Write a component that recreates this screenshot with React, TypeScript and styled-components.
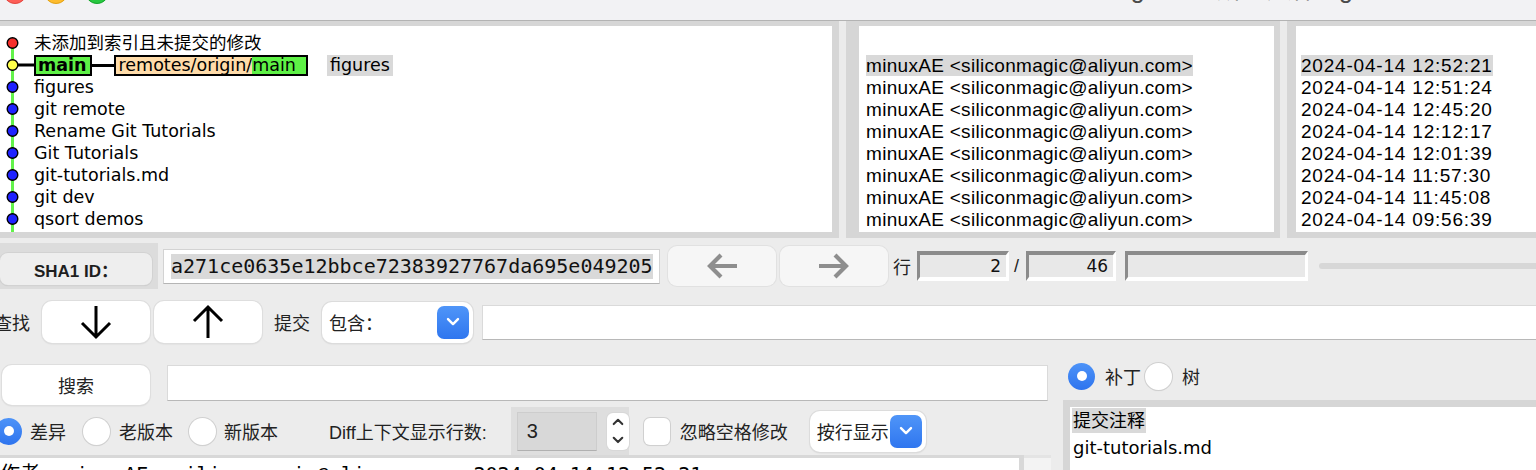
import styled, { createGlobalStyle } from "styled-components";

const GlobalStyle = createGlobalStyle`
  html, body { margin: 0; padding: 0; background: #ececec; overflow: hidden; }
  * { box-sizing: border-box; }
`;

const LIST_FONT = `"DejaVu Sans", "Noto Sans CJK SC", sans-serif`;
const UI_FONT = `"Liberation Sans", "Noto Sans CJK SC", sans-serif`;
const MONO_FONT = `"DejaVu Sans Mono", "Noto Sans CJK SC", monospace`;

type Commit = { title: string; author: string; date: string };

const commits: Commit[] = [
  { title: "figures", author: "minuxAE <siliconmagic@aliyun.com>", date: "2024-04-14 12:51:24" },
  { title: "git remote", author: "minuxAE <siliconmagic@aliyun.com>", date: "2024-04-14 12:45:20" },
  { title: "Rename Git Tutorials", author: "minuxAE <siliconmagic@aliyun.com>", date: "2024-04-14 12:12:17" },
  { title: "Git Tutorials", author: "minuxAE <siliconmagic@aliyun.com>", date: "2024-04-14 12:01:39" },
  { title: "git-tutorials.md", author: "minuxAE <siliconmagic@aliyun.com>", date: "2024-04-14 11:57:30" },
  { title: "git dev", author: "minuxAE <siliconmagic@aliyun.com>", date: "2024-04-14 11:45:08" },
  { title: "qsort demos", author: "minuxAE <siliconmagic@aliyun.com>", date: "2024-04-14 09:56:39" },
];

const Window = styled.div`
  width: 1536px;
  height: 470px;
  overflow: hidden;
  display: flex;
  flex-direction: column;
  background: #ececec;
`;

const TitleBar = styled.div`
  flex-shrink: 0;
  height: 57px;
  margin-top: -36px;
  display: flex;
  align-items: center;
  background: #f2f2f4;
  border-bottom: 1px solid #b3b3b3;
`;

const Lights = styled.div`
  display: flex;
  gap: 17px;
  margin-left: 3px;
`;

const Light = styled.span<{ $c: string; $b: string }>`
  width: 24px;
  height: 24px;
  border-radius: 50%;
  background: ${(p) => p.$c};
  border: 1px solid ${(p) => p.$b};
`;

const Title = styled.div`
  margin-left: auto;
  margin-right: 158px;
  margin-bottom: 10px;
  font: 25px ${UI_FONT};
  color: #4b4b4b;
`;

const TopPane = styled.div`
  flex-shrink: 0;
  height: 219px;
  display: flex;
  align-items: flex-start;
`;

const Panel = styled.div<{ $w?: number; $l: number; $r: number }>`
  ${(p) => (p.$w ? `width: ${p.$w}px;` : "flex: 1;")}
  height: 217px;
  background: #fff;
  border-style: solid;
  border-color: #d6d6d6;
  border-width: 5px ${(p) => p.$r}px 6px ${(p) => p.$l}px;
  overflow: hidden;
  padding-top: 6px;
`;

const Sash = styled.div`
  width: 7px;
  height: 217px;
  background: #ebebeb;
`;

const CommitRow = styled.div`
  height: 22px;
  display: flex;
  align-items: center;
  white-space: nowrap;
  font: 17.5px ${LIST_FONT};
  color: #000;
  & > * { flex-shrink: 0; }
`;

const Headline = styled.span<{ $sel?: boolean }>`
  padding: 0 ${(p) => (p.$sel ? 3 : 0)}px;
  margin-left: ${(p) => (p.$sel ? 19 : 0)}px;
  line-height: 21px;
  background: ${(p) => (p.$sel ? "#d9d9d9" : "transparent")};
`;

const TagFrame = styled.span`
  height: 21px;
  display: flex;
  border: 2px solid #000;
`;

const TagPart = styled.span<{ $kind: "head" | "remote"; $pl?: number; $pr?: number }>`
  height: 17px;
  line-height: 17px;
  padding: 0 ${(p) => p.$pr ?? 0}px 0 ${(p) => p.$pl ?? 0}px;
  background: ${(p) => (p.$kind === "head" ? "#5ef146" : "#ffdcaa")};
`;

const Connector = styled.span<{ $w: number }>`
  width: ${(p) => p.$w}px;
  height: 3px;
  background: #000;
`;

const InfoRow = styled.div<{ $pad: number; $ls: number }>`
  height: 22px;
  display: flex;
  align-items: center;
  padding-left: ${(p) => p.$pad}px;
  white-space: nowrap;
  font: 19px "Liberation Sans", sans-serif;
  letter-spacing: ${(p) => p.$ls}px;
  color: #000;
`;

const InfoText = styled.span<{ $sel?: boolean }>`
  line-height: 21px;
  background: ${(p) => (p.$sel ? "#d9d9d9" : "transparent")};
`;

const ShaRow = styled.div`
  flex-shrink: 0;
  height: 52px;
  display: flex;
  align-items: center;
`;

const ShaWrap = styled.div`
  width: 158px;
  height: 46px;
  background: #dcdcdc;
  display: flex;
  align-items: flex-end;
  padding-bottom: 4px;
`;

const ShaButton = styled.div`
  width: 152px;
  height: 32px;
  border-radius: 8px;
  background: #eeeeee;
  box-shadow: 0 0 0 1px #d2d2d2, 0 1px 1px rgba(0, 0, 0, 0.1);
  display: flex;
  align-items: center;
  justify-content: center;
  font: bold 17px ${UI_FONT};
  color: #1e1e1e;
`;

const ShaEntry = styled.div`
  margin-left: 5px;
  width: 497px;
  height: 35px;
  background: #fff;
  border: 1px solid #d3d3d3;
  border-bottom-color: #b5b5b5;
  display: flex;
  align-items: center;
  padding-left: 7px;
  font: 20px ${MONO_FONT};
  color: #111;
`;

const Selection = styled.span`
  background: #d9d9d9;
  line-height: 25px;
`;

const NavButton = styled.div<{ $ml: number }>`
  margin-left: ${(p) => p.$ml}px;
  width: 108px;
  height: 40px;
  border-radius: 9px;
  background: #f6f6f6;
  box-shadow: 0 0 0 1px #e1e1e1;
  display: flex;
  align-items: center;
  justify-content: center;
`;

const Label = styled.span<{ $ml?: number }>`
  margin-left: ${(p) => p.$ml ?? 0}px;
  font: 18px ${UI_FONT};
  color: #222;
  white-space: nowrap;
`;

const SunkenEntry = styled.div<{ $w: number; $ml: number }>`
  margin-left: ${(p) => p.$ml}px;
  width: ${(p) => p.$w}px;
  height: 30px;
  border-style: solid;
  border-width: 4px 3px 4px 3px;
  border-color: #8b8b8b #fff #fff #8b8b8b;
  background: #e8e8e8;
  display: flex;
  align-items: center;
  justify-content: flex-end;
  padding-right: 5px;
  font: 17px "DejaVu Sans", sans-serif;
  color: #111;
`;

const SliderTrack = styled.div`
  margin-left: 11px;
  flex: 1;
  margin-right: -20px;
  height: 6px;
  border-radius: 3px;
  background: #d7d7d7;
`;

const FindRow = styled.div`
  flex-shrink: 0;
  height: 60px;
  display: flex;
  align-items: center;
`;

const WhiteButton = styled.div<{ $w: number; $h: number; $ml: number }>`
  margin-left: ${(p) => p.$ml}px;
  width: ${(p) => p.$w}px;
  height: ${(p) => p.$h}px;
  flex-shrink: 0;
  border-radius: 10px;
  background: #fff;
  box-shadow: 0 0 0 1px #dedede, 0 1px 2px rgba(0, 0, 0, 0.12);
  display: flex;
  align-items: center;
  justify-content: center;
  font: 18px ${UI_FONT};
  color: #222;
`;

const Combo = styled.div<{ $w: number; $ml: number }>`
  margin-left: ${(p) => p.$ml}px;
  width: ${(p) => p.$w}px;
  height: 41px;
  flex-shrink: 0;
  border-radius: 10px;
  background: #fff;
  box-shadow: 0 0 0 1px #dcdcdc, 0 1px 2px rgba(0, 0, 0, 0.12);
  display: flex;
  align-items: center;
  padding: 0 4px 0 7px;
  font: 18px ${UI_FONT};
  color: #222;
`;

const ComboText = styled.span`
  flex: 1;
  min-width: 0;
  overflow: hidden;
  white-space: nowrap;
`;

const BlueButton = styled.span`
  flex-shrink: 0;
  width: 32px;
  height: 33px;
  border-radius: 7px;
  background: linear-gradient(#4f95f8, #2f76ef);
  display: flex;
  align-items: center;
  justify-content: center;
`;

const TextField = styled.div<{ $w?: number; $ml: number; $h: number }>`
  margin-left: ${(p) => p.$ml}px;
  ${(p) => (p.$w ? `width: ${p.$w}px;` : "flex: 1; margin-right: -5px;")}
  height: ${(p) => p.$h}px;
  background: #fff;
  border: 1px solid #dadada;
  border-bottom-color: #b8b8b8;
`;

const Lower = styled.div`
  flex: 1;
  min-height: 0;
  display: flex;
`;

const LowerLeft = styled.div`
  width: 1051px;
  display: flex;
  flex-direction: column;
`;

const SearchRow = styled.div`
  height: 55px;
  padding-top: 13px;
  display: flex;
  align-items: flex-start;
`;

const OptionsRow = styled.div`
  height: 48px;
  display: flex;
  align-items: center;
  margin-left: -5px;
`;

const RadioCircle = styled.span<{ $on?: boolean; $ml?: number }>`
  margin-left: ${(p) => p.$ml ?? 0}px;
  flex-shrink: 0;
  width: 27px;
  height: 27px;
  border-radius: 50%;
  display: flex;
  align-items: center;
  justify-content: center;
  background: ${(p) => (p.$on ? "linear-gradient(#4d93f8, #2e74ee)" : "#fff")};
  box-shadow: ${(p) => (p.$on ? "none" : "0 0 0 1px #d0d0d0, 0 1px 1px rgba(0,0,0,0.12)")};
  &::after {
    content: "";
    display: ${(p) => (p.$on ? "block" : "none")};
    width: 10px;
    height: 10px;
    border-radius: 50%;
    background: #fff;
  }
`;

const SpinWrap = styled.div`
  margin-left: 24px;
  width: 118px;
  height: 48px;
  background: #dedede;
  display: flex;
  align-items: center;
  padding-left: 6px;
  gap: 10px;
`;

const SpinEntry = styled.div`
  width: 80px;
  height: 39px;
  background: #d8d8d8;
  border: 1px solid #cdcdcd;
  border-bottom-color: #b0b0b0;
  display: flex;
  align-items: center;
  padding-left: 9px;
  font: 20px ${UI_FONT};
  color: #222;
`;

const Stepper = styled.div`
  width: 22px;
  height: 37px;
  border-radius: 6px;
  background: #fff;
  box-shadow: 0 0 0 1px #d8d8d8;
  display: flex;
  flex-direction: column;
  align-items: center;
  justify-content: space-around;
`;

const CheckBox = styled.span`
  margin-left: 15px;
  width: 26px;
  height: 27px;
  border-radius: 6px;
  background: #fff;
  box-shadow: 0 0 0 1px #d0d0d0, 0 1px 1px rgba(0, 0, 0, 0.1);
`;

const DiffArea = styled.div`
  flex: 1;
  display: flex;
  min-height: 0;
`;

const DiffText = styled.div`
  width: 1024px;
  background: #fff;
  border-top: 3px solid #d8d8d8;
  border-right: 5px solid #d8d8d8;
  padding: 4px 0 0 0;
  font: 20px/24px ${MONO_FONT};
  white-space: pre;
  color: #000;
  overflow: hidden;
`;

const ScrollTrack = styled.div`
  flex: 1;
  background: #f3f3f3;
  border-top: 3px solid #e4e4e4;
`;

const LowerRight = styled.div`
  flex: 1;
  margin-left: 12px;
  display: flex;
  flex-direction: column;
`;

const RadioRow = styled.div`
  height: 48px;
  display: flex;
  align-items: center;
  padding-left: 5px;
`;

const FileList = styled.div`
  flex: 1;
  background: #fff;
  border-top: 7px solid #d6d6d6;
  border-left: 7px solid #d6d6d6;
  padding: 1px 0 0 2px;
  font: 18px ${LIST_FONT};
  color: #000;
`;

const FileItem = styled.div`
  height: 27px;
  display: flex;
  align-items: flex-start;
`;

const FileText = styled.span<{ $sel?: boolean }>`
  padding: 0 1px;
  line-height: 25px;
  background: ${(p) => (p.$sel ? "#d9d9d9" : "transparent")};
`;

const GraphCell = ({ dot, first, branch }: { dot?: string; first?: boolean; branch?: boolean }) => (
  <svg width="34" height="22" viewBox="0 0 34 22">
    <line x1="12.5" x2="12.5" y1={first ? 11 : 0} y2="22" stroke="#62f24a" strokeWidth="3" />
    {branch && <line x1="12" x2="34" y1="11" y2="11" stroke="#000" strokeWidth="3" />}
    {dot && <circle cx="12.5" cy="11" r="5.3" fill={dot} stroke="#000" strokeWidth="1.4" />}
  </svg>
);

const BigArrow = ({ up }: { up?: boolean }) => (
  <svg width="34" height="36" viewBox="0 0 34 36">
    <path
      d={up ? "M17 34 V3 M3 17 L17 3 L31 17" : "M17 2 V33 M3 19 L17 33 L31 19"}
      stroke="#000"
      strokeWidth="3"
      fill="none"
    />
  </svg>
);

const GrayArrow = ({ right }: { right?: boolean }) => (
  <svg width="34" height="28" viewBox="0 0 34 28">
    <path
      d={right ? "M2 14 H29 M18 3 L29 14 L18 25" : "M32 14 H5 M16 3 L5 14 L16 25"}
      stroke="#8e8e8e"
      strokeWidth="4.2"
      fill="none"
    />
  </svg>
);

const Chevron = ({ color = "#fff", up, size = 14 }: { color?: string; up?: boolean; size?: number }) => (
  <svg width={size} height={size * 0.65} viewBox="0 0 14 9">
    <path
      d={up ? "M2 7 L7 2 L12 7" : "M2 2 L7 7 L12 2"}
      stroke={color}
      strokeWidth="2.4"
      fill="none"
      strokeLinecap="round"
      strokeLinejoin="round"
    />
  </svg>
);

export default function App() {
  return (
    <Window>
      <GlobalStyle />
      <TitleBar>
        <Lights>
          <Light $c="#fe5f57" $b="#e2463f" />
          <Light $c="#febc2e" $b="#e1a116" />
          <Light $c="#28c840" $b="#13a42a" />
        </Lights>
        <Title>/Users/minux/gitTest: 所有文件 - gitk</Title>
      </TitleBar>

      <TopPane>
        <Panel $w={839} $l={0} $r={7}>
          <CommitRow>
            <GraphCell dot="#f5302a" first />
            <Headline>未添加到索引且未提交的修改</Headline>
          </CommitRow>
          <CommitRow>
            <GraphCell dot="#ffff4a" branch />
            <TagFrame>
              <TagPart $kind="head" $pl={2} $pr={3}>
                <b>main</b>
              </TagPart>
            </TagFrame>
            <Connector $w={22} />
            <TagFrame>
              <TagPart $kind="remote" $pl={3}>remotes/origin/</TagPart>
              <TagPart $kind="head" $pr={10}>main</TagPart>
            </TagFrame>
            <Headline $sel>figures</Headline>
          </CommitRow>
          {commits.map((c) => (
            <CommitRow key={c.date}>
              <GraphCell dot="#1f22ff" />
              <Headline>{c.title}</Headline>
            </CommitRow>
          ))}
          <CommitRow>
            <GraphCell />
          </CommitRow>
        </Panel>
        <Sash />
        <Panel $w={434} $l={13} $r={6}>
          <InfoRow $pad={7} $ls={0.3} />
          <InfoRow $pad={7} $ls={0.3}>
            <InfoText $sel>minuxAE &lt;siliconmagic@aliyun.com&gt;</InfoText>
          </InfoRow>
          {commits.map((c) => (
            <InfoRow key={c.date} $pad={7} $ls={0.3}>
              <InfoText>{c.author}</InfoText>
            </InfoRow>
          ))}
        </Panel>
        <Sash />
        <Panel $l={9} $r={0}>
          <InfoRow $pad={5} $ls={0.8} />
          <InfoRow $pad={5} $ls={0.8}>
            <InfoText $sel>2024-04-14 12:52:21</InfoText>
          </InfoRow>
          {commits.map((c) => (
            <InfoRow key={c.date} $pad={5} $ls={0.8}>
              <InfoText>{c.date}</InfoText>
            </InfoRow>
          ))}
        </Panel>
      </TopPane>

      <ShaRow>
        <ShaWrap>
          <ShaButton>SHA1 ID：</ShaButton>
        </ShaWrap>
        <ShaEntry>
          <Selection>a271ce0635e12bbce72383927767da695e049205</Selection>
        </ShaEntry>
        <NavButton $ml={8}>
          <GrayArrow />
        </NavButton>
        <NavButton $ml={4}>
          <GrayArrow right />
        </NavButton>
        <Label $ml={5}>行</Label>
        <SunkenEntry $w={92} $ml={6}>2</SunkenEntry>
        <Label $ml={5}>/</Label>
        <SunkenEntry $w={90} $ml={7}>46</SunkenEntry>
        <SunkenEntry $w={183} $ml={9} />
        <SliderTrack />
      </ShaRow>

      <FindRow>
        <Label $ml={-6}>查找</Label>
        <WhiteButton $w={108} $h={42} $ml={12}>
          <BigArrow />
        </WhiteButton>
        <WhiteButton $w={108} $h={42} $ml={4}>
          <BigArrow up />
        </WhiteButton>
        <Label $ml={12}>提交</Label>
        <Combo $w={151} $ml={12}>
          <ComboText>包含：</ComboText>
          <BlueButton>
            <Chevron />
          </BlueButton>
        </Combo>
        <TextField $ml={9} $h={35} />
      </FindRow>

      <Lower>
        <LowerLeft>
          <SearchRow>
            <WhiteButton $w={148} $h={40} $ml={2}>搜索</WhiteButton>
            <TextField $w={881} $ml={17} $h={36} />
          </SearchRow>
          <OptionsRow>
            <RadioCircle $on />
            <Label $ml={8}>差异</Label>
            <RadioCircle $ml={17} />
            <Label $ml={9}>老版本</Label>
            <RadioCircle $ml={16} />
            <Label $ml={8}>新版本</Label>
            <Label $ml={51}>Diff上下文显示行数:</Label>
            <SpinWrap>
              <SpinEntry>3</SpinEntry>
              <Stepper>
                <Chevron color="#333" up size={12} />
                <Chevron color="#333" size={12} />
              </Stepper>
            </SpinWrap>
            <CheckBox />
            <Label $ml={10}>忽略空格修改</Label>
            <Combo $w={116} $ml={22}>
              <ComboText>按行显示</ComboText>
              <BlueButton>
                <Chevron />
              </BlueButton>
            </Combo>
          </OptionsRow>
          <DiffArea>
            <DiffText>{"作者: minuxAE <siliconmagic@aliyun.com> 2024-04-14 12:52:21"}</DiffText>
            <ScrollTrack />
          </DiffArea>
        </LowerLeft>
        <LowerRight>
          <RadioRow>
            <RadioCircle $on />
            <Label $ml={10}>补丁</Label>
            <RadioCircle $ml={4} />
            <Label $ml={10}>树</Label>
          </RadioRow>
          <FileList>
            <FileItem>
              <FileText $sel>提交注释</FileText>
            </FileItem>
            <FileItem>
              <FileText>git-tutorials.md</FileText>
            </FileItem>
          </FileList>
        </LowerRight>
      </Lower>
    </Window>
  );
}
